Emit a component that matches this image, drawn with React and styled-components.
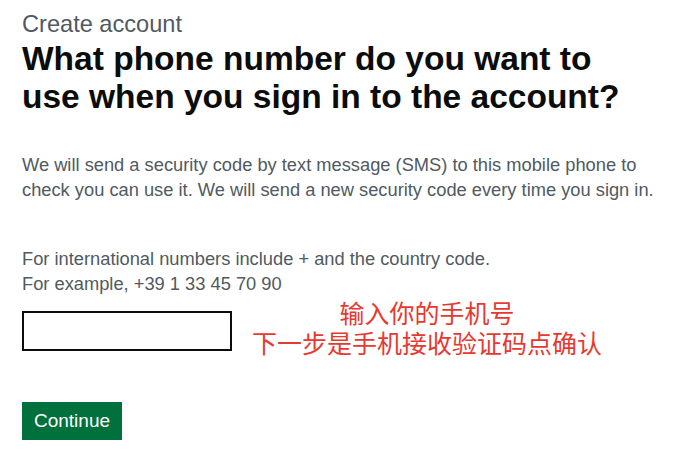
import React from 'react';
import styled, { createGlobalStyle } from 'styled-components';

const GlobalStyle = createGlobalStyle`
    body {
        margin: 0;
        background: #ffffff;
        font-family: "Liberation Sans", Arial, sans-serif;
        color: #0b0c0c;
    }
`;

const Page = styled.main`
    padding: 10px 22px 0;
`;

const Caption = styled.span`
    display: block;
    font-size: 23.6px;
    line-height: 28px;
    color: #505a5f;
`;

const Heading = styled.h1`
    margin: 2px 0 0;
    font-size: 33.5px;
    line-height: 38px;
    font-weight: 700;
    color: #0b0c0c;
`;

const Body = styled.p`
    margin: ${props => props.top || 0}px 0 0;
    font-size: 18.3px;
    line-height: 25px;
    color: #505a5f;
    white-space: nowrap;
`;

const Row = styled.div`
    display: flex;
    align-items: flex-start;
    margin-top: 1px;
`;

const PhoneInput = styled.input`
    box-sizing: border-box;
    width: 210px;
    height: 40px;
    margin-top: 14px;
    border: 2px solid #0b0c0c;
    border-radius: 0;
    padding: 5px;
    font-size: 18px;
    font-family: inherit;
`;

const Note = styled.div`
    margin-left: 20px;
    text-align: center;
    font-family: "Noto Sans CJK SC", sans-serif;
    font-size: 25px;
    line-height: 30px;
    color: #e8382f;
    white-space: nowrap;
`;

const Button = styled.button`
    display: block;
    margin-top: 45px;
    width: 100px;
    height: 38px;
    padding: 0;
    border: 0;
    border-radius: 0;
    background: #00703c;
    box-shadow: 0 2px 0 #002d18;
    color: #ffffff;
    font-family: inherit;
    font-size: 19px;
    cursor: pointer;
`;

export default function App() {
    return (
        <>
            <GlobalStyle />
            <Page>
                <Caption>Create account</Caption>
                <Heading>
                    What phone number do you want to<br />
                    use when you sign in to the account?
                </Heading>
                <Body top={36}>
                    We will send a security code by text message (SMS) to this mobile phone to<br />
                    check you can use it. We will send a new security code every time you sign in.
                </Body>
                <Body top={44}>
                    For international numbers include + and the country code.<br />
                    For example, +39 1 33 45 70 90
                </Body>
                <Row>
                    <PhoneInput type="tel" aria-label="Phone number" />
                    <Note>
                        输入你的手机号<br />
                        下一步是手机接收验证码点确认
                    </Note>
                </Row>
                <Button>Continue</Button>
            </Page>
        </>
    );
}
